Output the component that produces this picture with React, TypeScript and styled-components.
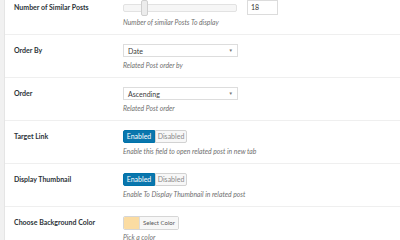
import styled, { createGlobalStyle } from "styled-components";

const GlobalStyle = createGlobalStyle`
  html, body {
    margin: 0;
    padding: 0;
    background: #ffffff;
    font-family: "Lato", "Liberation Sans", sans-serif;
    color: #23282d;
  }
`;

const Page = styled.div`
  display: flex;
  width: 400px;
  height: 240px;
  overflow: hidden;
`;

const Gutter = styled.div`
  width: 4px;
  flex-shrink: 0;
  background: #f1f1f1;
  border-right: 1px solid #e5e5e5;
`;

const Form = styled.div`
  flex: 1;
  margin-top: -8px;
`;

const Row = styled.div`
  display: grid;
  grid-template-columns: 109px 1fr;
  padding: 9px 0 7px 9px;
  border-bottom: 1px solid #efefef;
  height: 26px;
`;

const Label = styled.div`
  font-size: 7px;
  font-weight: 700;
  line-height: 13px;
  color: #2c3338;
`;

const Field = styled.div`
  display: flex;
  flex-direction: column;
  gap: 4px;
`;

const Controls = styled.div`
  display: flex;
  align-items: center;
  gap: 10px;
  height: 13px;
`;

const Desc = styled.p`
  margin: 0;
  font-size: 6.8px;
  font-style: italic;
  color: #6f6f6f;
  line-height: 9px;
`;

const Track = styled.div`
  position: relative;
  width: 112px;
  height: 6px;
  border: 1px solid #e2e2e2;
  border-radius: 2px;
  background: #f6f6f6;
`;

const Handle = styled.div`
  position: absolute;
  left: 17px;
  top: -5px;
  width: 5px;
  height: 14px;
  border: 1px solid #cfcfcf;
  border-radius: 2px;
  background: #ececec;
`;

const NumberBox = styled.div`
  width: 26px;
  height: 13px;
  border: 1px solid #dcdcdc;
  padding-left: 3px;
  font-size: 7px;
  line-height: 13px;
  color: #333;
`;

const Select = styled.div`
  box-sizing: border-box;
  display: flex;
  align-items: center;
  justify-content: space-between;
  width: 115px;
  height: 13px;
  padding: 0 4px;
  border: 1px solid #dddddd;
  font-size: 7px;
  color: #3a3a3a;
`;

const Caret = styled.span`
  font-size: 4.5px;
  color: #777;
`;

const Toggle = styled.div`
  display: flex;
`;

const ToggleButton = styled.div<{ $active?: boolean }>`
  box-sizing: border-box;
  width: 32px;
  height: 13px;
  font-size: 7px;
  line-height: 11px;
  text-align: center;
  border: 1px solid ${(p) => (p.$active ? "#0073aa" : "#d2d2d2")};
  background: ${(p) => (p.$active ? "#0a76ad" : "#f7f7f7")};
  color: ${(p) => (p.$active ? "#ffffff" : "#8a8a8a")};
  border-radius: ${(p) => (p.$active ? "2px 0 0 2px" : "0 2px 2px 0")};
`;

const ColorPicker = styled.div`
  display: flex;
  height: 12px;
  border: 1px solid #d6d6d6;
  border-radius: 2px;
  overflow: hidden;
`;

const Swatch = styled.div`
  width: 15px;
  background: #fbdca2;
`;

const ColorLabel = styled.div`
  padding: 0 3px;
  background: #f7f7f7;
  border-left: 1px solid #dcdcdc;
  font-size: 6px;
  line-height: 12px;
  color: #555;
`;

const EnableToggle = () => (
  <Toggle>
    <ToggleButton $active>Enabled</ToggleButton>
    <ToggleButton>Disabled</ToggleButton>
  </Toggle>
);

export default function App() {
  return (
    <Page>
      <GlobalStyle />
      <Gutter />
      <Form>
        <Row>
          <Label>Number of Similar Posts</Label>
          <Field>
            <Controls>
              <Track>
                <Handle />
              </Track>
              <NumberBox>18</NumberBox>
            </Controls>
            <Desc>Number of similar Posts To display</Desc>
          </Field>
        </Row>
        <Row>
          <Label>Order By</Label>
          <Field>
            <Controls>
              <Select>
                Date<Caret>▼</Caret>
              </Select>
            </Controls>
            <Desc>Related Post order by</Desc>
          </Field>
        </Row>
        <Row>
          <Label>Order</Label>
          <Field>
            <Controls>
              <Select>
                Ascending<Caret>▼</Caret>
              </Select>
            </Controls>
            <Desc>Related Post order</Desc>
          </Field>
        </Row>
        <Row>
          <Label>Target Link</Label>
          <Field>
            <Controls>
              <EnableToggle />
            </Controls>
            <Desc>Enable this field to open related post in new tab</Desc>
          </Field>
        </Row>
        <Row>
          <Label>Display Thumbnail</Label>
          <Field>
            <Controls>
              <EnableToggle />
            </Controls>
            <Desc>Enable To Display Thumbnail in related post</Desc>
          </Field>
        </Row>
        <Row>
          <Label>Choose Background Color</Label>
          <Field>
            <Controls>
              <ColorPicker>
                <Swatch />
                <ColorLabel>Select Color</ColorLabel>
              </ColorPicker>
            </Controls>
            <Desc>Pick a color</Desc>
          </Field>
        </Row>
      </Form>
    </Page>
  );
}
